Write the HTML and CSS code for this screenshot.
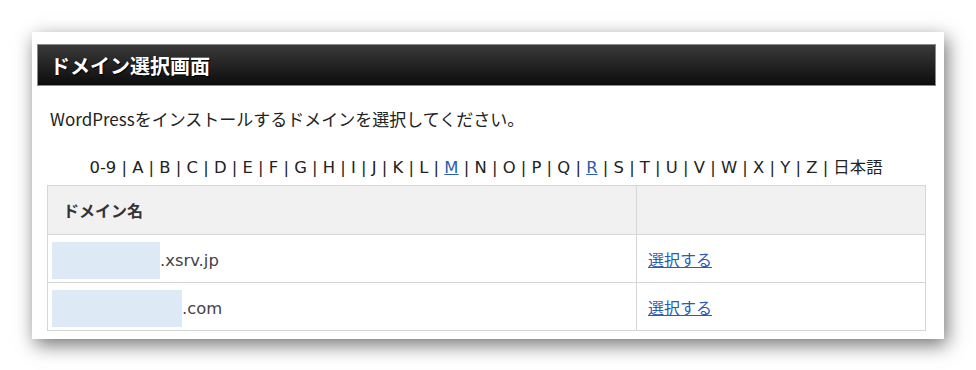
FILE: index.html
```html
<!DOCTYPE html>
<html lang="ja">
<head>
<meta charset="utf-8">
<link rel="stylesheet" href="styles.css">
</head>
<body>
<div class="panel">
  <div class="titlebar"><h1 class="title">ドメイン選択画面</h1></div>
  <div class="content">
    <p class="intro">WordPressをインストールするドメインを選択してください。</p>
    <p class="alpha">0-9 | A | B | C | D | E | F | G | H | I | J | K | L | <a href="#">M</a> | N | O | P | Q | <a href="#">R</a> | S | T | U | V | W | X | Y | Z | 日本語</p>
    <table class="domains">
      <colgroup><col class="col1"><col class="col2"></colgroup>
      <tr class="head"><th class="c1">ドメイン名</th><th class="c2"></th></tr>
      <tr><td class="c1"><span class="dom"><span class="mask mask-a"></span>.xsrv.jp</span></td><td class="c2"><a href="#">選択する</a></td></tr>
      <tr><td class="c1"><span class="dom"><span class="mask mask-b"></span>.com</span></td><td class="c2"><a href="#">選択する</a></td></tr>
    </table>
  </div>
</div>
</body>
</html>
```
FILE: styles.css
```css
html, body { margin: 0; padding: 0; background: #ffffff; }
body {
  font-family: "Noto Sans CJK JP", "DejaVu Sans", sans-serif;
  color: #333333;
  width: 976px;
  height: 370px;
  overflow: hidden;
  padding-top: 32px;
  box-sizing: border-box;
}
.panel {
  margin-left: 32px;
  width: 912px;
  height: 307px;
  background: #ffffff;
  box-shadow: 3px 6px 18px rgba(0,0,0,0.55);
  box-sizing: border-box;
  padding-top: 12px;
}
.titlebar {
  margin: 0 8px 0 5px;
  height: 42px;
  box-sizing: border-box;
  border: 1px solid #8a8a8a;
  background: linear-gradient(#3a3a3a, #0c0c0c);
  display: flex;
  align-items: center;
  padding-left: 12px;
}
.title {
  margin: 0;
  font-size: 20px;
  font-weight: bold;
  color: #ffffff;
  text-shadow: 1px 1px 1px #000;
}
.content { margin: 0 19px 0 15px; }
.intro {
  margin: 21px 0 0 3px;
  font-size: 17px;
  line-height: 24px;
  color: #222222;
}
.alpha {
  margin: 25px 0 0 0;
  text-align: center;
  font-family: "DejaVu Sans", "Noto Sans CJK JP", sans-serif;
  font-size: 16.4px;
  line-height: 24px;
  color: #222222;
}
.alpha a { color: #2a5db0; }
.domains {
  margin-top: 5px;
  width: 878px;
  table-layout: fixed;
  border-collapse: collapse;
  border: 1px solid #d6d6d6;
  font-size: 16px;
}
.col1 { width: 589px; }
.col2 { width: 289px; }
.domains th, .domains td {
  border: 1px solid #d6d6d6;
  padding: 0;
  text-align: left;
}
.domains .head { background: #f1f1f1; height: 49px; }
.domains .head th { font-weight: bold; color: #333; padding-left: 15px; }
.domains tr { height: 48px; }
.domains td.c1 { padding-left: 4px; }
.domains td.c2, .domains th.c2 { padding-left: 11px; }
.dom {
  display: flex;
  align-items: center;
  height: 37px;
  margin-top: 3px;
  color: #444;
  font-family: "DejaVu Sans", "Noto Sans CJK JP", sans-serif;
  font-size: 16.4px;
}
.mask { display: inline-block; height: 37px; background: #dde9f5; }
.mask-a { width: 108px; }
.mask-b { width: 130px; }
.domains a { color: #2a5db0; text-decoration: underline; }
```
